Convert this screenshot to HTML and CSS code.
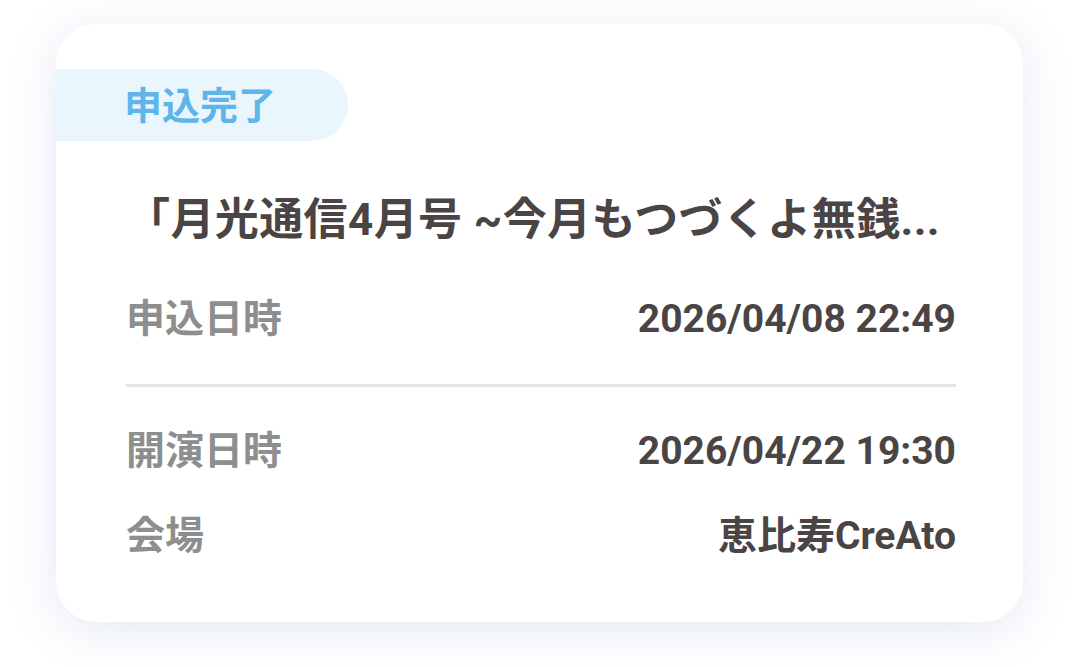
FILE: index.html
```html
<!DOCTYPE html>
<html lang="ja">
<head>
<meta charset="utf-8">
<link rel="stylesheet" href="styles.css">
</head>
<body>
<div class="page">
  <div class="card">
    <div class="badge">申込完了</div>
    <div class="body">
      <div class="title">「月光通信4月号 ~今月もつづくよ無銭...</div>
      <div class="row row-first">
        <span class="label">申込日時</span>
        <span class="value">2026/04/08 22:49</span>
      </div>
      <div class="divider"></div>
      <div class="row row-second">
        <span class="label">開演日時</span>
        <span class="value">2026/04/22 19:30</span>
      </div>
      <div class="row row-third">
        <span class="label">会場</span>
        <span class="value">恵比寿CreAto</span>
      </div>
    </div>
  </div>
</div>
</body>
</html>
```

FILE: styles.css
```css
html, body {
  margin: 0;
  padding: 0;
  background: #ffffff;
}
body {
  font-family: Roboto, "Noto Sans CJK JP", sans-serif;
  width: 1080px;
  height: 667px;
  overflow: hidden;
}
.page {
  padding: 24px 57px 0 56px;
}
.card {
  background: #ffffff;
  border-radius: 40px;
  height: 598px;
  box-sizing: border-box;
  padding-top: 45px;
  box-shadow: 0 8px 50px rgba(80, 115, 180, 0.16);
  overflow: hidden;
}
.badge {
  display: inline-flex;
  align-items: center;
  height: 72px;
  width: 292px;
  box-sizing: border-box;
  padding-left: 68px;
  padding-bottom: 5px;
  background: #eaf6fe;
  border-radius: 0 36px 36px 0;
  color: #5fb4e9;
  font-weight: 700;
  font-size: 38px;
}
.body {
  padding: 0 67px 0 70px;
}
.title {
  margin-top: 49px;
  height: 60px;
  line-height: 60px;
  font-size: 44px;
  font-weight: 700;
  color: #4a4444;
  white-space: nowrap;
  letter-spacing: 0.4px;
}
.row {
  display: flex;
  justify-content: space-between;
  align-items: center;
  height: 56px;
  line-height: 56px;
}
.row-first { margin-top: 41px; }
.row-second { margin-top: 36px; }
.row-third { margin-top: 29px; }
.label {
  font-size: 39px;
  font-weight: 600;
  color: #8e8e8e;
}
.value {
  font-size: 39px;
  font-weight: 700;
  color: #4a4444;
}
.divider {
  margin-top: 37px;
  height: 3px;
  background: #e4e4e4;
}
```
